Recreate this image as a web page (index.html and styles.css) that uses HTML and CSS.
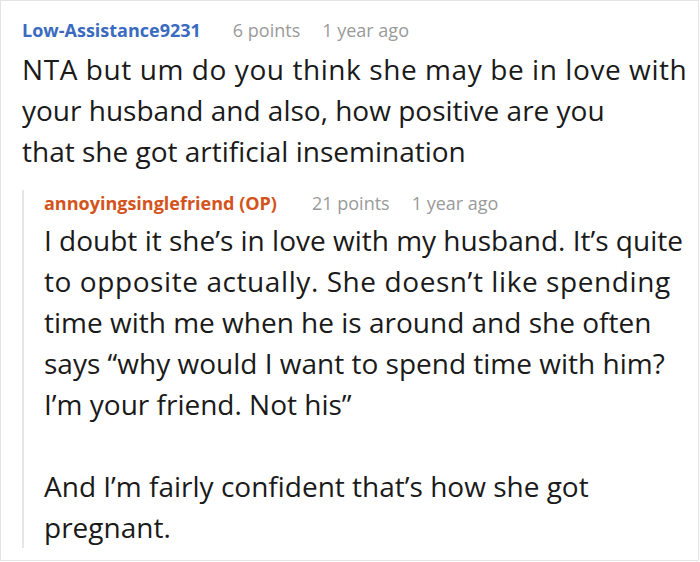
FILE: index.html
```html
<!DOCTYPE html>
<html>
<head>
<meta charset="utf-8">
<link rel="stylesheet" href="styles.css">
</head>
<body>
<div class="frame">
  <div class="comment">
    <div class="meta">
      <span class="author">Low-Assistance9231</span>
      <span class="info">6 points</span>
      <span class="info">1 year ago</span>
    </div>
    <div class="body"><span class="spread">NTA but um do you think she may be in love with</span><br>your husband and also, how positive are you<br>that she got artificial insemination</div>
    <div class="reply">
      <div class="meta">
        <span class="author op">annoyingsinglefriend (OP)</span>
        <span class="info">21 points</span>
        <span class="info">1 year ago</span>
      </div>
      <div class="body">
        <p>I doubt it she’s in love with my husband. It’s quite<br><span class="spread">to opposite actually. She doesn’t like spending</span><br>time with me when he is around and she often<br>says “why would I want to spend time with him?<br>I’m your friend. Not his”</p>
        <p>And I’m fairly confident that’s how she got<br>pregnant.</p>
      </div>
    </div>
  </div>
</div>
</body>
</html>
```
FILE: styles.css
```css
html, body {
  margin: 0;
  padding: 0;
  background: #fff;
}
.frame {
  width: 699px;
  height: 561px;
  box-sizing: border-box;
  border: 1px solid #e4e4e4;
  overflow: hidden;
  font-family: "Open Sans", "Noto Sans", sans-serif;
  color: #1a1a1a;
}
.comment {
  padding: 16px 0 0 21px;
}
.meta {
  font-size: 18px;
  line-height: 26px;
  height: 26px;
  display: flex;
}
.author {
  font-weight: bold;
  color: #3a6bc0;
  margin-right: 32px;
}
.author.op {
  color: #d4531c;
  margin-right: 35px;
}
.info {
  color: #9a9a9a;
  margin-right: 22px;
}
.body {
  font-size: 28px;
  line-height: 41px;
  margin-top: 6px;
  white-space: nowrap;
}
.spread {
  letter-spacing: 0.58px;
}
.body p {
  margin: 0;
}
.body p + p {
  margin-top: 41px;
}
.reply {
  margin-top: 18px;
  border-left: 2px solid #e6e6e6;
  padding-left: 20px;
}
.reply .body {
  margin-top: 4px;
}
```
